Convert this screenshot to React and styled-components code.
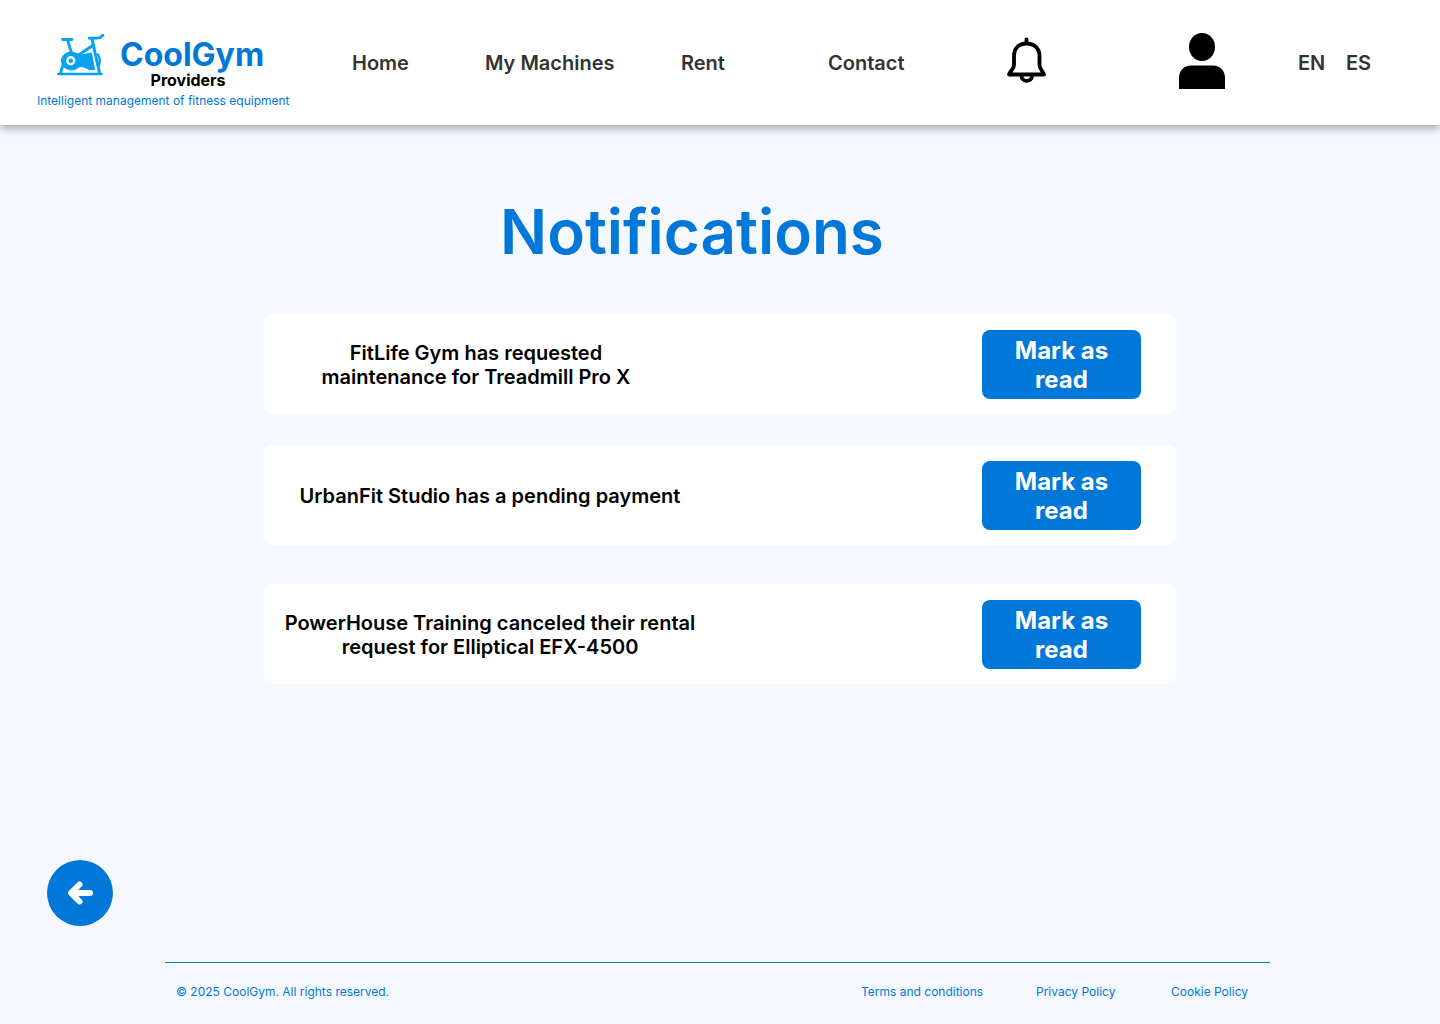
import React, { useState } from "react";
import styled, { createGlobalStyle } from "styled-components";

const blue = "#0078d9";

const GlobalStyle = createGlobalStyle`
  *, *::before, *::after { box-sizing: border-box; }
  body {
    margin: 0;
    background: #f5f8ff;
    font-family: Inter, "Liberation Sans", sans-serif;
    color: #000;
  }
  button { font-family: inherit; border: 0; cursor: pointer; padding: 0; }
  a { text-decoration: none; }
`;

const Page = styled.div`
  min-height: 100vh;
  display: flex;
  flex-direction: column;
`;

const Header = styled.header`
  display: grid;
  grid-template-columns: minmax(0, 315fr) minmax(0, 655fr) minmax(0, 433fr);
  align-items: center;
  min-height: 125px;
  padding-left: 37px;
  background: #fff;
  box-shadow: 0 4px 8px rgba(0, 0, 0, 0.3);
`;

const Brand = styled.a`
  display: flex;
  flex-direction: column;
  align-items: flex-start;
  gap: 5px;
  padding-top: 18px;
  color: ${blue};
`;

const BrandRow = styled.span`
  display: flex;
  align-items: flex-start;
  gap: 14px;
  padding-left: 20px;
`;

const BrandText = styled.span`
  display: flex;
  flex-direction: column;
  padding-top: 4px;
`;

const BrandName = styled.span`
  font-size: 32px;
  font-weight: 700;
  line-height: 34px;
`;

const BrandRole = styled.span`
  padding-right: 8px;
  font-size: 16px;
  font-weight: 700;
  line-height: 16px;
  text-align: center;
  color: #000;
`;

const Tagline = styled.span`
  font-size: 12px;
  line-height: 16px;
  white-space: nowrap;
`;

const Nav = styled.nav`
  display: grid;
  grid-template-columns: 133fr 196fr 147fr 179fr;
`;

const Actions = styled.div`
  display: grid;
  grid-template-columns: 172fr 119fr 48fr 94fr;
  align-items: center;
  justify-items: start;
`;

const NavLink = styled.a`
  font-size: 20px;
  font-weight: 600;
  line-height: 24px;
  white-space: nowrap;
  color: #333;
`;

const LanguageButton = styled.button`
  background: none;
  font-size: 20px;
  font-weight: 600;
  line-height: 24px;
  color: #333;
`;

const IconButton = styled.button`
  display: flex;
  padding-bottom: 4px;
  background: none;
  color: #000;
`;

const Main = styled.main`
  width: 100%;
  max-width: 960px;
  margin: 0 auto;
  padding: 68px 24px 0;
`;

const Title = styled.h1`
  margin: 0 0 43px;
  padding-right: 56px;
  font-size: 62px;
  font-weight: 600;
  line-height: 78px;
  text-align: center;
  color: ${blue};
`;

const List = styled.ul`
  margin: 0;
  padding: 0;
  list-style: none;
`;

const Card = styled.li`
  display: flex;
  align-items: center;
  justify-content: space-between;
  min-height: 100px;
  margin-bottom: ${(p) => (p.$loose ? 39 : 31)}px;
  padding: 0 35px 0 16px;
  border-radius: 8px;
  background: #fff;
`;

const Message = styled.p`
  width: ${(p) => (p.$narrow ? 392 : 420)}px;
  margin: 0;
  padding: 2px ${(p) => (p.$narrow ? 24 : 0)}px 0;
  font-size: 20px;
  font-weight: 600;
  line-height: 24px;
  text-align: center;
`;

const ReadButton = styled.button`
  flex: none;
  width: 159px;
  padding: 6px 24px 5px;
  border-radius: 8px;
  background: ${blue};
  color: #fff;
  font-size: 24px;
  font-weight: 700;
  line-height: 29px;
`;

const BackButton = styled.button`
  display: flex;
  align-items: center;
  justify-content: center;
  width: 66px;
  height: 66px;
  margin: auto 0 36px 47px;
  border-radius: 50%;
  background: ${blue};
  color: #fff;
`;

const Footer = styled.footer`
  display: grid;
  grid-template-columns: 685fr 175fr 135fr 99fr;
  margin: 0 170px 0 165px;
  padding: 21px 0 25px 11px;
  border-top: 1px solid ${blue};
  font-size: 12px;
  line-height: 15px;
  color: ${blue};
`;

const FooterLink = styled.a`
  color: inherit;
  white-space: nowrap;
`;

const BikeIcon = () => (
  <svg width="49" height="43" viewBox="0 0 49 43" fill="none" stroke="#06a2f2" strokeLinecap="round" strokeLinejoin="round" aria-hidden="true">
    <path d="M1.2 40H44.5" strokeWidth="2.4" />
    <path d="M5.5 5.5H15M10.5 6L14.5 19" strokeWidth="2.8" />
    <path d="M32 4.2H39.5L43 3.6L46 1.2" strokeWidth="2.8" />
    <path d="M35 5L37 14L42.5 39" strokeWidth="3" />
    <path d="M36.5 11L20 22" strokeWidth="2.8" />
    <path d="M6 31L3.5 39" strokeWidth="2.8" />
    <path d="M13.7 18C18 18 20 20.5 24 21L34.5 19L37.5 35.5H32C28 33 25 32 22 33C18 36 15 36.5 12 35.5C7.5 34.5 4.5 31 4.5 26.8C4.5 22 9 18 13.7 18Z" fill="#06a2f2" strokeWidth="1" />
    <path d="M41 20.5C43.5 24 43 30 41.5 32" strokeWidth="2.4" />
    <circle cx="13.7" cy="26.7" r="3.5" fill="#06a2f2" stroke="#fff" strokeWidth="2.4" />
  </svg>
);

const BellIcon = () => (
  <svg width="40" height="47" viewBox="0 0 40 47" fill="none" stroke="currentColor" strokeWidth="3.8" strokeLinecap="round" strokeLinejoin="round" aria-hidden="true">
    <path d="M19.5 2.5V6" />
    <path d="M7 19C7 11 12 6.5 19.5 6.5S32.5 11 32.5 19V28C32.5 32.5 36 34 37 37.5H2C3 34 7 32.5 7 28Z" />
    <path d="M14.5 39C14.5 45.5 25 45.5 25 39" strokeLinecap="butt" />
  </svg>
);

const UserIcon = () => (
  <svg width="46" height="56" viewBox="0 0 46 56" fill="currentColor" aria-hidden="true">
    <ellipse cx="23" cy="14" rx="13" ry="14" />
    <path d="M0 56V45C0 37.5 5 32.5 12 32.5H34C41 32.5 46 37.5 46 45V56Z" />
  </svg>
);

const ArrowIcon = () => (
  <svg width="26" height="26" viewBox="0 0 26 26" fill="none" stroke="currentColor" strokeWidth="6" strokeLinecap="round" strokeLinejoin="round" aria-hidden="true">
    <path d="M23 13H6M12.5 4.5L4 13L12.5 21.5" />
    <path d="M4 13L12 5V21Z" fill="currentColor" stroke="none" />
  </svg>
);

const notifications = [
  { id: 1, text: "FitLife Gym has requested maintenance for Treadmill Pro X", narrow: true },
  { id: 2, text: "UrbanFit Studio has a pending payment", loose: true },
  { id: 3, text: "PowerHouse Training canceled their rental request for Elliptical EFX-4500" },
];

export default function App() {
  const [items, setItems] = useState(notifications);
  const markAsRead = (id) => setItems((list) => list.filter((n) => n.id !== id));

  return (
    <Page>
      <GlobalStyle />
      <Header>
        <Brand href="#home">
          <BrandRow>
            <BikeIcon />
            <BrandText>
              <BrandName>CoolGym</BrandName>
              <BrandRole>Providers</BrandRole>
            </BrandText>
          </BrandRow>
          <Tagline>Intelligent management of fitness equipment</Tagline>
        </Brand>
        <Nav aria-label="Main">
          <NavLink href="#home">Home</NavLink>
          <NavLink href="#machines">My Machines</NavLink>
          <NavLink href="#rent">Rent</NavLink>
          <NavLink href="#contact">Contact</NavLink>
        </Nav>
        <Actions>
          <IconButton type="button" aria-label="Notifications"><BellIcon /></IconButton>
          <IconButton type="button" aria-label="Profile"><UserIcon /></IconButton>
          <LanguageButton type="button">EN</LanguageButton>
          <LanguageButton type="button">ES</LanguageButton>
        </Actions>
      </Header>
      <Main>
        <Title>Notifications</Title>
        <List>
          {items.map((n) => (
            <Card key={n.id} $loose={n.loose}>
              <Message $narrow={n.narrow}>{n.text}</Message>
              <ReadButton type="button" onClick={() => markAsRead(n.id)}>Mark as read</ReadButton>
            </Card>
          ))}
        </List>
      </Main>
      <BackButton type="button" aria-label="Go back"><ArrowIcon /></BackButton>
      <Footer>
        <span>© 2025 CoolGym. All rights reserved.</span>
        <FooterLink href="#terms">Terms and conditions</FooterLink>
        <FooterLink href="#privacy">Privacy Policy</FooterLink>
        <FooterLink href="#cookies">Cookie Policy</FooterLink>
      </Footer>
    </Page>
  );
}
